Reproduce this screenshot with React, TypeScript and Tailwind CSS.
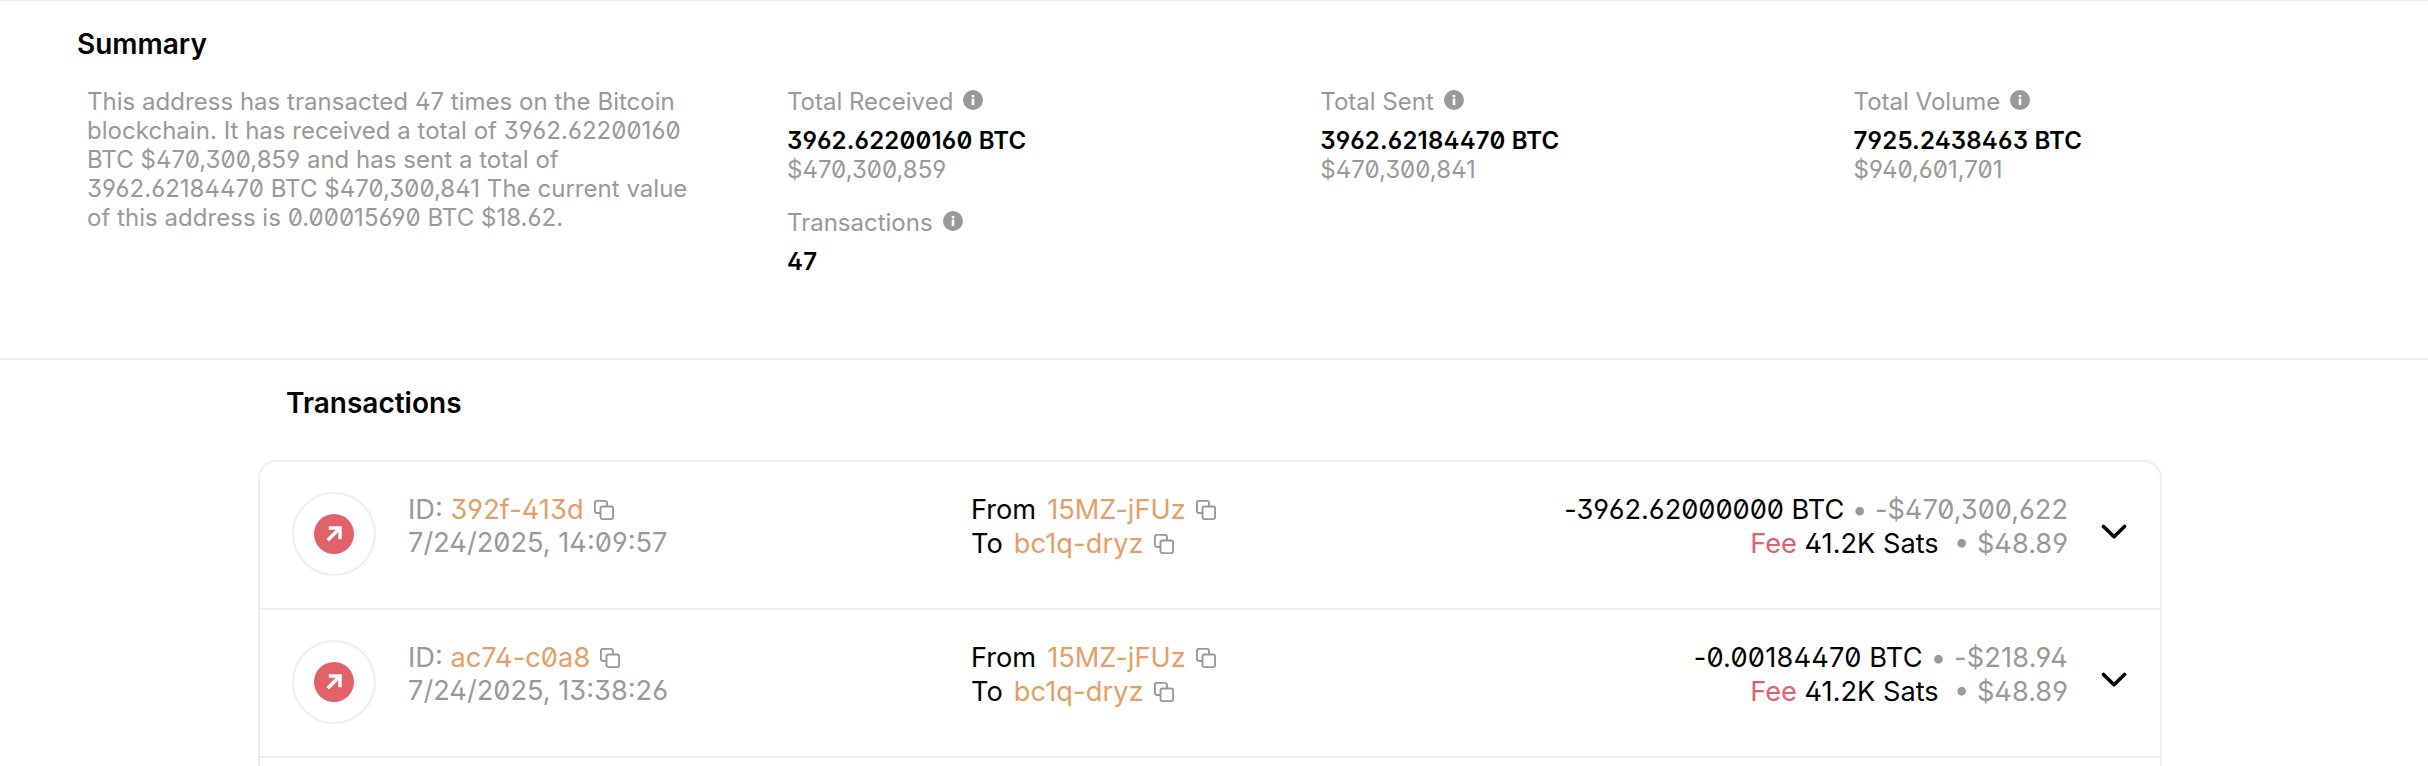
import React from "react";

interface Stat {
  label: string;
  value: string;
  usd?: string;
}

interface Tx {
  id: string;
  time: string;
  from: string;
  to: string;
  amount: string;
  usd: string;
  fee: string;
  feeUsd: string;
}

const stats: Stat[] = [
  { label: "Total Received", value: "3962.62200160 BTC", usd: "$470,300,859" },
  { label: "Total Sent", value: "3962.62184470 BTC", usd: "$470,300,841" },
  { label: "Total Volume", value: "7925.2438463 BTC", usd: "$940,601,701" },
  { label: "Transactions", value: "47" },
];

const transactions: Tx[] = [
  {
    id: "392f-413d",
    time: "7/24/2025, 14:09:57",
    from: "15MZ-jFUz",
    to: "bc1q-dryz",
    amount: "-3962.62000000 BTC",
    usd: "-$470,300,622",
    fee: "41.2K Sats",
    feeUsd: "$48.89",
  },
  {
    id: "ac74-c0a8",
    time: "7/24/2025, 13:38:26",
    from: "15MZ-jFUz",
    to: "bc1q-dryz",
    amount: "-0.00184470 BTC",
    usd: "-$218.94",
    fee: "41.2K Sats",
    feeUsd: "$48.89",
  },
];

function InfoIcon() {
  return (
    <svg viewBox="0 0 20 20" className="w-5 h-5 ml-2.5 -mt-1">
      <circle cx="10" cy="10" r="10" fill="#999999" />
      <rect x="8.7" y="5" width="2.6" height="2.4" fill="#fff" />
      <rect x="8.7" y="8.6" width="2.6" height="6.4" fill="#fff" />
    </svg>
  );
}

function CopyIcon() {
  return (
    <svg viewBox="0 0 20 20" fill="none" stroke="#999999" strokeWidth="1.9" className="w-5 h-5 ml-2.5">
      <path d="M6 13H2.9A2 2 0 0 1 .9 11V2.9A2 2 0 0 1 2.9.9H11A2 2 0 0 1 13 2.9V6" />
      <rect x="6.5" y="6.5" width="12.6" height="12.6" rx="2" />
    </svg>
  );
}

function TxRow({ tx }: { tx: Tx }) {
  return (
    <div className="h-[148px] border-b-2 border-[#eeeeee] flex items-start pl-8 pr-[33px] text-[27.2px] leading-[34px]">
      <div className="w-[84px] h-[84px] mt-[30px] rounded-full border-2 border-[#eeeeee] flex items-center justify-center">
        <div className="w-10 h-10 rounded-full bg-[#e2626b] flex items-center justify-center">
          <svg viewBox="0 0 16 16" fill="none" stroke="#fff" strokeWidth="3.5" className="w-4 h-4">
            <path d="M2.8 2H14V13.2M14 2L1.7 14.3" />
          </svg>
        </div>
      </div>

      <div className="w-[563px] ml-8 mt-8 leading-[32.6px] text-[#999999]">
        <div className="flex items-center">
          ID:&nbsp;<span className="text-[#e4a066] tracking-[0.06px]">{tx.id}</span>
          <CopyIcon />
        </div>
        <div>{tx.time}</div>
      </div>

      <div className="mt-[31px]">
        <div className="flex items-center">
          <span>From</span>
          <span className="ml-[11px] text-[#e4a066]">{tx.from}</span>
          <CopyIcon />
        </div>
        <div className="flex items-center">
          <span>To</span>
          <span className="ml-[11px] text-[#e4a066] tracking-[0.1px]">{tx.to}</span>
          <CopyIcon />
        </div>
      </div>

      <div className="ml-auto mt-[31px] text-right text-[#999999]">
        <div className={tx.amount.length < 16 ? "tracking-[0.2px]" : "tracking-[-0.02px]"}>
          <span className="text-black">{tx.amount}</span> • {tx.usd}
        </div>
        <div>
          <span className="text-[#e2626b]">Fee</span> <span className="text-black">{tx.fee}</span>&nbsp; • {tx.feeUsd}
        </div>
      </div>

      <svg viewBox="0 0 26 16" fill="none" stroke="#000" strokeWidth="3.6" strokeLinecap="round" strokeLinejoin="round" className="w-[26px] h-4 ml-[33px] mt-[62px]">
        <path d="M2.5 2.5L13 12.8L23.5 2.5" />
      </svg>
    </div>
  );
}

export default function App() {
  return (
    <main className="h-[766px] overflow-hidden bg-white text-black font-['Inter',sans-serif] [font-feature-settings:'zero','ss01','cv09']">
      {/* Summary */}
      <section className="h-[360px] border-t border-b-2 border-[#eeeeee] pl-[77px] pt-[23px]">
        <h2 className="text-[28px] leading-10 font-semibold">Summary</h2>
        <div className="flex mt-[23px] text-[24px] leading-[29px] text-[#999999]">
          <p className="w-[620px] ml-2.5 tracking-[0.03px]">
            This address has transacted 47 times on the Bitcoin blockchain. It has received a total of 3962.62200160 BTC
            $470,300,859 and has sent a total of 3962.62184470 BTC $470,300,841 The current value of this address is
            0.00015690 BTC $18.62.
          </p>
          <div className="grid grid-cols-[533.3px_533.3px_533.3px] gap-y-6 ml-20 content-start">
            {stats.map((s) => (
              <div key={s.label}>
                <div className="flex items-center mb-2.5">
                  {s.label}
                  <InfoIcon />
                </div>
                <div className="text-black font-semibold tracking-[0.18px]">{s.value}</div>
                {s.usd && <div>{s.usd}</div>}
              </div>
            ))}
          </div>
        </div>
      </section>

      {/* Transactions */}
      <section className="w-[1904px] ml-[258px]">
        <h2 className="pl-7 pt-[23px] text-[28px] leading-10 font-semibold">Transactions</h2>
        <div className="mt-[37px] h-[400px] border-2 border-[#eeeeee] rounded-[18px]">
          {transactions.map((tx) => (
            <TxRow key={tx.id} tx={tx} />
          ))}
        </div>
      </section>
    </main>
  );
}
